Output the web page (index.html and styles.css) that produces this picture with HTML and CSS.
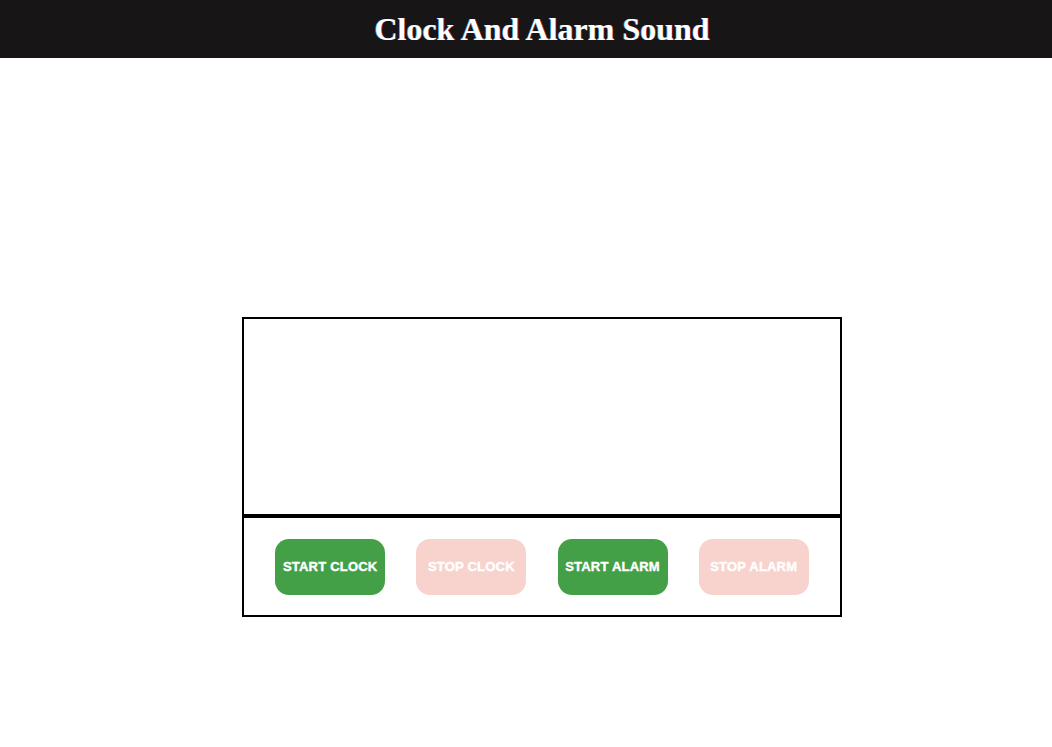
FILE: index.html
```html
<!DOCTYPE html>
<html>
<head>
<meta charset="utf-8">
<title>Clock And Alarm Sound</title>
<link rel="stylesheet" href="styles.css">
</head>
<body>
<header class="topbar">
  <h1 class="title">Clock And Alarm Sound</h1>
</header>
<main class="panel">
  <section class="display"></section>
  <section class="controls">
    <button class="btn btn-on">START CLOCK</button>
    <button class="btn btn-off">STOP CLOCK</button>
    <button class="btn btn-on">START ALARM</button>
    <button class="btn btn-off">STOP ALARM</button>
  </section>
</main>
</body>
</html>
```

FILE: styles.css
```css
html, body {
  margin: 0;
  padding: 0;
  background: #ffffff;
}

.topbar {
  height: 58px;
  padding-left: 32px;
  background: #171516;
  display: flex;
  align-items: center;
  justify-content: center;
}

.title {
  margin: 0;
  font-family: "Liberation Serif", "Times New Roman", serif;
  font-weight: bold;
  font-size: 32px;
  color: #ffffff;
  text-shadow: -0.6px 0 rgba(80, 200, 255, 0.7), 0.6px 0 rgba(230, 40, 40, 0.6);
}

.panel {
  width: 600px;
  margin: 259px 0 0 242px;
  display: flex;
  flex-direction: column;
}

.display {
  height: 199px;
  box-sizing: border-box;
  border: 2px solid #000000;
}

.controls {
  height: 101px;
  box-sizing: border-box;
  border: 2px solid #000000;
  display: flex;
  align-items: center;
  justify-content: space-evenly;
}

.btn {
  width: 110px;
  height: 56px;
  border: none;
  border-radius: 14px;
  color: #ffffff;
  font-family: "Liberation Sans", Arial, sans-serif;
  font-weight: bold;
  font-size: 13px;
  letter-spacing: 0.2px;
  -webkit-text-stroke: 0.4px #ffffff;
  padding: 0;
}

.btn-on {
  background: #43a047;
}

.btn-off {
  background: #f8d3cd;
}
```
